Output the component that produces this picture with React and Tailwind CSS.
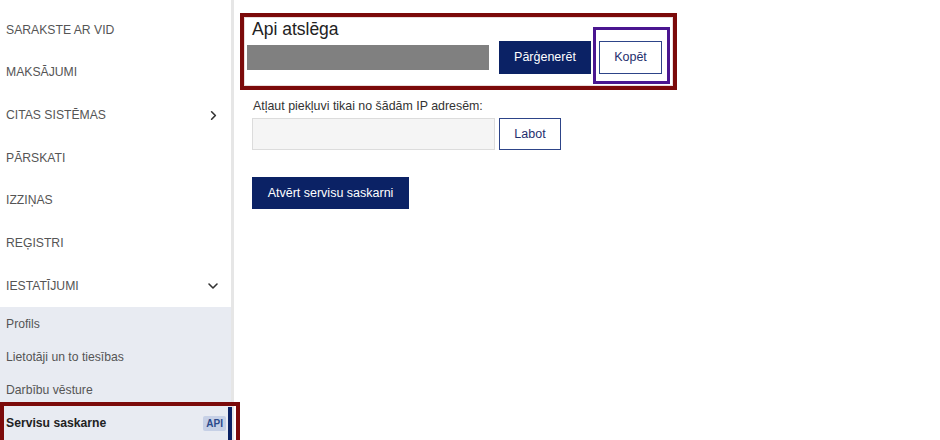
import React from "react";
import { ChevronRight, ChevronDown } from "lucide-react";

const font = { fontFamily: '"Liberation Sans", Arial, sans-serif' };

function MainItem({ label, icon }) {
  return (
    <div className="flex h-[42.67px] items-center justify-between pl-[6px] pr-[10px] text-[12.2px] text-[#555]">
      <span>{label}</span>
      {icon}
    </div>
  );
}

function SubItem({ label }) {
  return (
    <div className="flex h-[33px] items-center pl-[6px] text-[12.2px] text-[#555]">{label}</div>
  );
}

export default function App() {
  return (
    <div className="relative flex h-[440px] w-[940px] overflow-hidden bg-white" style={font}>
      <aside className="w-[234px] shrink-0 border-r-[3px] border-[#e6e6e6] pt-[8.6px]">
        <MainItem label="SARAKSTE AR VID" />
        <MainItem label="MAKSĀJUMI" />
        <MainItem
          label="CITAS SISTĒMAS"
          icon={<ChevronRight size={15} strokeWidth={2.6} className="text-[#333]" />}
        />
        <MainItem label="PĀRSKATI" />
        <MainItem label="IZZIŅAS" />
        <MainItem label="REĢISTRI" />
        <MainItem
          label="IESTATĪJUMI"
          icon={<ChevronDown size={16} strokeWidth={2.4} className="text-[#333]" />}
        />
        <div className="bg-[#e8ebf2] pt-[0.4px]">
          <SubItem label="Profils" />
          <SubItem label="Lietotāji un to tiesības" />
          <SubItem label="Darbību vēsture" />
          <div className="flex h-[33px] items-center justify-between pl-[6px] text-[12.2px] font-bold text-[#222]">
            <span>Servisu saskarne</span>
            <div className="flex h-full items-center gap-[2px]">
              <span className="rounded-[2px] bg-[#c6d0e6] px-[3px] py-[1px] text-[10px] font-bold leading-[13px] text-[#2b4a8c]">
                API
              </span>
              <div className="-mr-[1px] h-full w-[4px] bg-[#0b2265]" />
            </div>
          </div>
        </div>
      </aside>

      <main className="flex-1 pt-[13px]">
        <div className="ml-[6px] h-[77px] w-[437px] border-4 border-[#7b0a0a]">
          <div className="flex h-full border border-[#eadcdc]">
            <div className="ml-[2px] w-[242px]">
              <div className="pl-[5px] pt-[1px] text-[17.5px] leading-[20px] text-[#222]">Api atslēga</div>
              <div className="mt-[6px] h-[25px] bg-[#808080]" />
            </div>
            <button className="ml-[10px] mt-[23px] h-[33px] w-[92px] bg-[#0b2265] text-[12.5px] font-medium text-white">
              Pārģenerēt
            </button>
            <div className="ml-[2px] mt-[9px] h-[57px] w-[77px] border-[3px] border-[#4a1690]">
              <button className="ml-[3px] mt-[11px] h-[33px] w-[63px] border border-[#2d4488] bg-white text-[12.5px] text-[#1f2f6e]">
                Kopēt
              </button>
            </div>
          </div>
        </div>

        <div className="ml-[19px] mt-[8px] text-[12.4px] leading-[16px] text-[#333]">
          Atļaut piekļuvi tikai no šādām IP adresēm:
        </div>
        <div className="ml-[18px] mt-[4px] flex gap-[4px]">
          <div className="h-[32px] w-[243px] border border-[#dcdcdc] bg-[#f5f5f5]" />
          <button className="h-[32px] w-[62px] border border-[#2d4488] bg-white text-[12.5px] text-[#1f2f6e]">
            Labot
          </button>
        </div>
        <button className="ml-[18px] mt-[27px] h-[32px] w-[157px] bg-[#0b2265] text-[12.5px] font-medium text-white">
          Atvērt servisu saskarni
        </button>
      </main>

      <div className="pointer-events-none absolute left-0 top-[402px] h-[44px] w-[240px] border-4 border-[#7b0a0a]" />
    </div>
  );
}
